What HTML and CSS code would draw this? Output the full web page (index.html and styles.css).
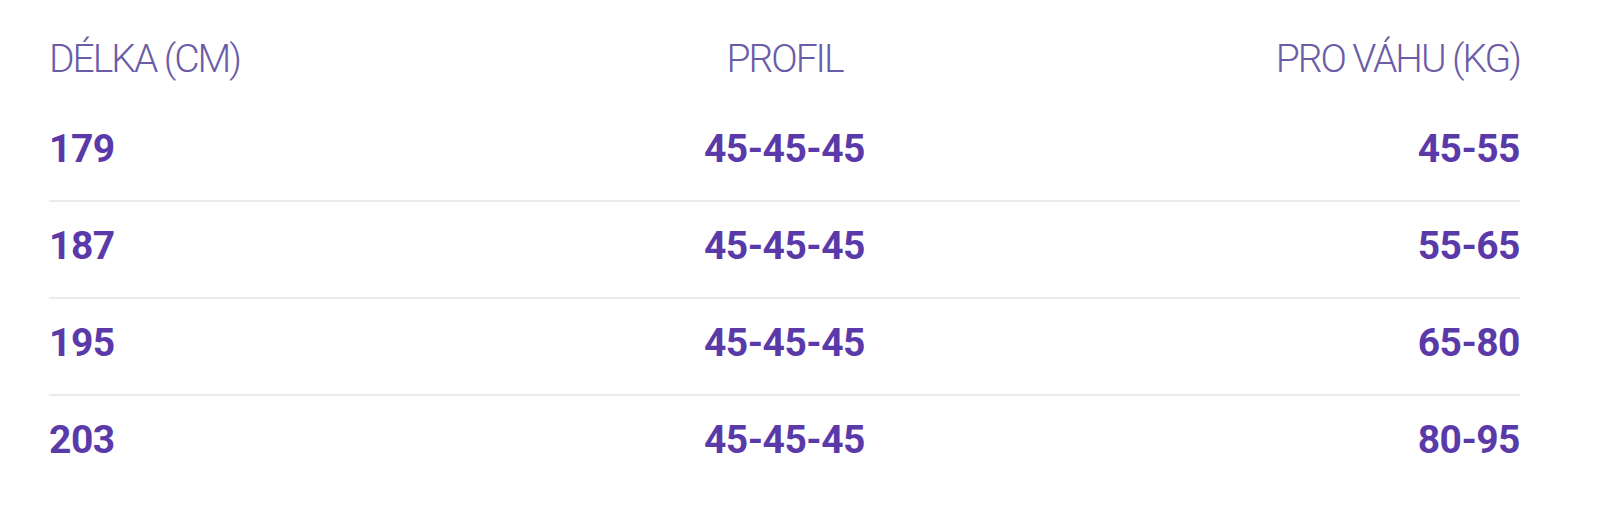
FILE: index.html
```html
<!DOCTYPE html>
<html lang="cs">
<head>
<meta charset="utf-8">
<title>Tabulka velikostí</title>
<link rel="stylesheet" href="styles.css">
</head>
<body>
<div class="table">
  <div class="row head">
    <div class="cell left">DÉLKA (CM)</div>
    <div class="cell center">PROFIL</div>
    <div class="cell right">PRO VÁHU (KG)</div>
  </div>
  <div class="row">
    <div class="cell left">179</div>
    <div class="cell center">45-45-45</div>
    <div class="cell right">45-55</div>
  </div>
  <div class="row">
    <div class="cell left">187</div>
    <div class="cell center">45-45-45</div>
    <div class="cell right">55-65</div>
  </div>
  <div class="row">
    <div class="cell left">195</div>
    <div class="cell center">45-45-45</div>
    <div class="cell right">65-80</div>
  </div>
  <div class="row last">
    <div class="cell left">203</div>
    <div class="cell center">45-45-45</div>
    <div class="cell right">80-95</div>
  </div>
</div>
</body>
</html>
```

FILE: styles.css
```css
html, body {
  margin: 0;
  padding: 0;
  background: #ffffff;
}
body {
  padding: 39px 80px 0 49px;
  font-family: Roboto, "Liberation Sans", sans-serif;
}
.table {
  width: 1471px;
}
.row {
  display: grid;
  grid-template-columns: 1fr 1fr 1fr;
  padding: 24px 0 31px;
  border-bottom: 2px solid #ebebeb;
  font-weight: 700;
  font-size: 39px;
  line-height: 40px;
  letter-spacing: -0.5px;
  color: #5a3aa8;
}
.row.head {
  padding: 0 0 26px;
  border-bottom: none;
  font-weight: 300;
  font-size: 39px;
  letter-spacing: -2px;
  color: #6b5ca8;
}
.row.last {
  border-bottom: none;
}
.cell.left { text-align: left; }
.cell.center { text-align: center; }
.cell.right { text-align: right; }
```
